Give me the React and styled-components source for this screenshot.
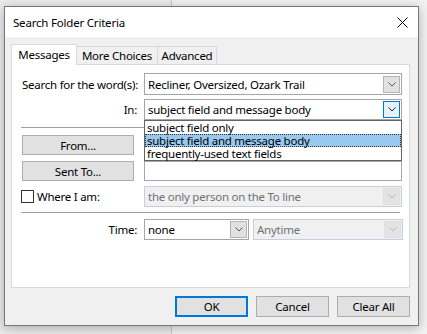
import React from 'react';
import styled, { createGlobalStyle, css } from 'styled-components';

const FONT = '"Noto Sans", "Open Sans", sans-serif';

const GlobalStyle = createGlobalStyle`
  html, body {
    margin: 0;
    padding: 0;
  }
  body {
    width: 427px;
    height: 334px;
    overflow: hidden;
    background: linear-gradient(90deg, #ebebeb 0, #ebebeb 171px, #c8c8c8 171px, #c8c8c8 172px, #f2f2f2 172px);
    font-family: ${FONT};
    font-size: 11.5px;
    letter-spacing: -0.25px;
    color: #000;
  }
`;

const Page = styled.div`
  padding: 6px 0 0 4px;
`;

const Dialog = styled.div`
  width: 413px;
  height: 318px;
  border: 1px solid #777;
  background: #f0f0f0;
  box-shadow: 0 2px 10px rgba(0, 0, 0, 0.28);
  display: flex;
  flex-direction: column;
`;

const TitleBar = styled.div`
  height: 30px;
  background: #fff;
  display: flex;
  align-items: center;
  justify-content: space-between;
  padding: 0 10px 0 8px;
  font-size: 11.5px;
  letter-spacing: -0.2px;
`;

const Body = styled.div`
  flex: 1;
  display: flex;
  flex-direction: column;
  padding: 7px 8px 0 6px;
`;

const TabStrip = styled.div`
  display: flex;
  align-items: flex-end;
  height: 20px;
  position: relative;
  z-index: 1;
`;

const Tab = styled.div`
  width: ${p => p.w}px;
  box-sizing: border-box;
  height: 18px;
  border: 1px solid #d9d9d9;
  border-bottom: none;
  border-left: none;
  background: #f0f0f0;
  display: flex;
  align-items: center;
  justify-content: center;
  ${p => p.active && css`
    height: 21px;
    margin-bottom: -1px;
    border-left: 1px solid #d9d9d9;
    background: #fff;
    padding-bottom: 2px;
  `}
`;

const Panel = styled.div`
  width: 399px;
  height: 224px;
  box-sizing: border-box;
  border: 1px solid #d9d9d9;
  background: #fff;
  padding: 8px 0 0 10px;
  position: relative;
  display: flex;
  flex-direction: column;
`;

const Row = styled.div`
  display: flex;
  align-items: center;
  gap: 6px;
  margin-top: ${p => p.mt || 0}px;
`;

const Cell = styled.div`
  width: 116px;
  flex-shrink: 0;
  display: flex;
  align-items: center;
  justify-content: ${p => (p.right ? 'flex-end' : 'flex-start')};
  padding-right: ${p => (p.right ? 1 : 0)}px;
  box-sizing: border-box;
  white-space: nowrap;
`;

const Separator = styled.div`
  width: 379px;
  height: 1px;
  background: #a0a0a0;
  margin: ${p => p.above}px 0 ${p => p.below}px -1px;
`;

const Combo = styled.div`
  width: ${p => p.w || 258}px;
  height: ${p => p.h || 21}px;
  box-sizing: border-box;
  border: 1px solid ${p => (p.disabled ? '#c3cfe2' : '#a6a6a6')};
  background: ${p => (p.disabled ? '#f0f0f0' : '#fff')};
  color: ${p => (p.disabled ? '#707070' : '#000')};
  display: flex;
  align-items: center;
  padding: 0 1px 0 3px;
  margin-left: ${p => p.ml || 0}px;
  white-space: nowrap;
`;

const ComboText = styled.span`
  flex: 1;
  overflow: hidden;
`;

const DropButton = styled.div`
  width: 17px;
  height: 17px;
  box-sizing: border-box;
  border: 1px solid ${p => (p.focus ? '#0078d7' : p.disabled ? '#e0e0e0' : '#b4b4b4')};
  background: ${p => (p.focus ? '#e5f1fb' : p.disabled ? '#e3e3e3' : '#e1e1e1')};
  display: flex;
  align-items: center;
  justify-content: center;
`;

const TextBox = styled.div`
  width: 258px;
  height: 20px;
  box-sizing: border-box;
  border: 1px solid #a6a6a6;
  background: #fff;
`;

const Button = styled.div`
  width: ${p => p.w || 73}px;
  height: ${p => p.h || 21}px;
  box-sizing: border-box;
  border: ${p => (p.primary ? '2px solid #0078d7' : '1px solid #adadad')};
  background: #e1e1e1;
  display: flex;
  align-items: center;
  justify-content: center;
`;

const CheckBox = styled.div`
  width: 13px;
  height: 13px;
  box-sizing: border-box;
  border: 1px solid #333;
  background: #fff;
  margin-left: -1px;
  margin-right: 3px;
`;

const ListPopup = styled.div`
  position: absolute;
  left: 132px;
  top: 55px;
  width: 258px;
  height: 41px;
  box-sizing: border-box;
  border: 1px solid #646464;
  background: #fff;
  z-index: 2;
`;

const ListItem = styled.div`
  height: 13px;
  line-height: 13px;
  padding-left: 2px;
  box-sizing: border-box;
  white-space: nowrap;
  ${p => p.selected && css`
    background: #99c9ef;
    outline: 1px dotted #333;
    outline-offset: -1px;
  `}
`;

const Actions = styled.div`
  display: flex;
  justify-content: flex-end;
  gap: 8px;
  margin-top: 8px;
`;

const Chevron = ({ color = '#555' }) => (
  <svg width="8" height="5" viewBox="0 0 8 5">
    <polyline points="0.5,0.5 4,4 7.5,0.5" fill="none" stroke={color} strokeWidth="1" />
  </svg>
);

const CloseIcon = () => (
  <svg width="11" height="11" viewBox="0 0 11 11">
    <path d="M0.5 0.5 L10.5 10.5 M10.5 0.5 L0.5 10.5" stroke="#000" strokeWidth="1" />
  </svg>
);

const ComboBox = ({ text, w, h, ml, focus, disabled }) => (
  <Combo w={w} h={h} ml={ml} disabled={disabled}>
    <ComboText>{text}</ComboText>
    <DropButton focus={focus} disabled={disabled}>
      <Chevron color={disabled ? '#b5b5b5' : focus ? '#222' : '#555'} />
    </DropButton>
  </Combo>
);

export default function App() {
  return (
    <>
      <GlobalStyle />
      <Page>
        <Dialog>
          <TitleBar>
            <span>Search Folder Criteria</span>
            <CloseIcon />
          </TitleBar>
          <Body>
            <TabStrip>
              <Tab w={66} active>Messages</Tab>
              <Tab w={81}>More Choices</Tab>
              <Tab w={59}>Advanced</Tab>
            </TabStrip>
            <Panel>
              <Row>
                <Cell>Search for the word(s):</Cell>
                <ComboBox text="Recliner, Oversized, Ozark Trail" h={22} />
              </Row>
              <Row mt={4}>
                <Cell right>In:</Cell>
                <ComboBox text="subject field and message body" focus />
              </Row>
              <Separator above={7} below={7} />
              <Row>
                <Cell>
                  <Button w={112} h={20}>From...</Button>
                </Cell>
                <TextBox />
              </Row>
              <Row mt={6}>
                <Cell>
                  <Button w={112} h={20}>Sent To...</Button>
                </Cell>
                <TextBox />
              </Row>
              <Row mt={5}>
                <Cell>
                  <CheckBox />
                  <span>Where I am:</span>
                </Cell>
                <ComboBox text="the only person on the To line" disabled />
              </Row>
              <Separator above={5} below={6} />
              <Row>
                <Cell right>Time:</Cell>
                <ComboBox text="none" w={105} />
                <ComboBox text="Anytime" w={150} ml={-2} disabled />
              </Row>
              <ListPopup>
                <ListItem>subject field only</ListItem>
                <ListItem selected>subject field and message body</ListItem>
                <ListItem>frequently-used text fields</ListItem>
              </ListPopup>
            </Panel>
            <Actions>
              <Button primary>OK</Button>
              <Button>Cancel</Button>
              <Button>Clear All</Button>
            </Actions>
          </Body>
        </Dialog>
      </Page>
    </>
  );
}
